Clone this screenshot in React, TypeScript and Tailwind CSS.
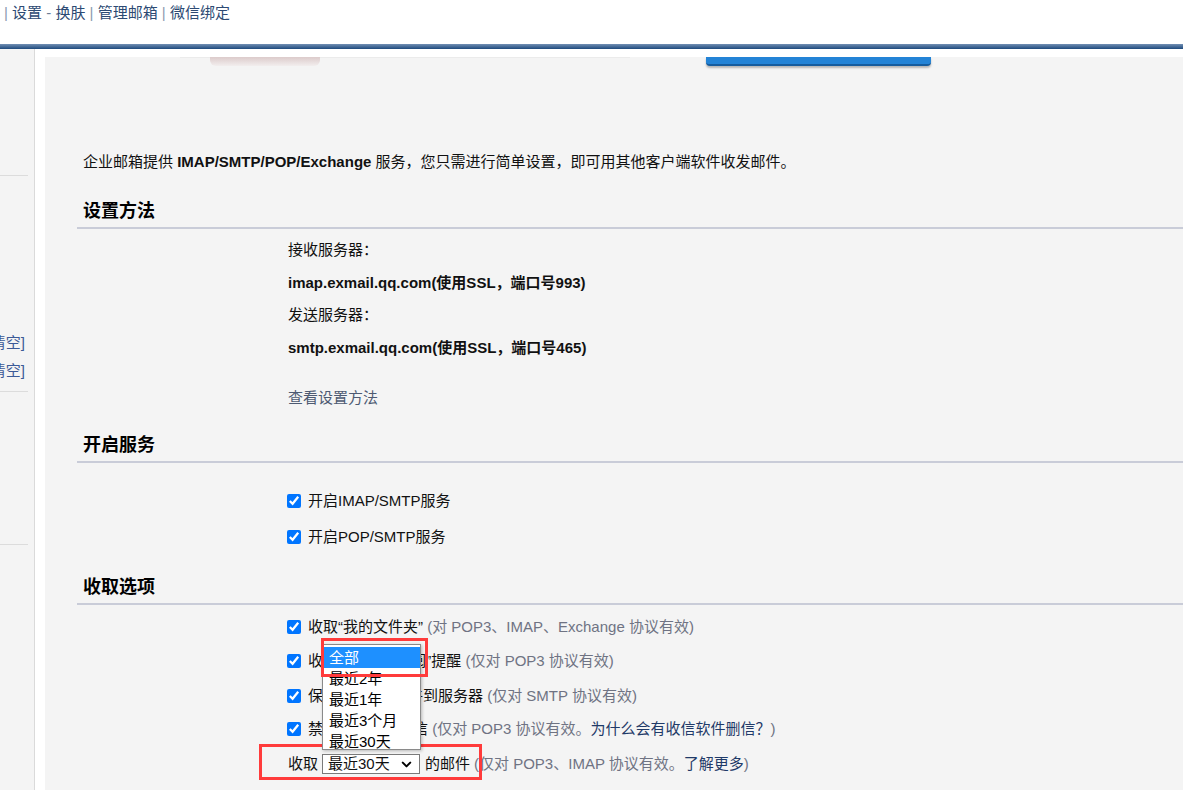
import { ChevronDown } from "lucide-react";

const hint = "text-[#6f7383]";
const link = "text-[#1f3a68]";

function Check({ children }: { children: React.ReactNode }) {
  return (
    <label className="flex h-[20px] items-center gap-[7px] leading-[20px] whitespace-nowrap">
      <input type="checkbox" defaultChecked className="m-0 h-[14px] w-[14px] shrink-0" />
      <span>{children}</span>
    </label>
  );
}

function SectionTitle({ children, className }: { children: React.ReactNode; className: string }) {
  return (
    <div className={`border-b-2 border-[#c9ccd8] pb-[4px] pl-[6px] ${className}`}>
      <div className="h-[24px] text-[18px] font-bold leading-[24px] text-black">{children}</div>
    </div>
  );
}

const options = ["全部", "最近2年", "最近1年", "最近3个月", "最近30天"];

export default function App() {
  return (
    <div className="flex h-[790px] w-[1183px] flex-col overflow-hidden bg-white font-['Liberation_Sans','Noto_Sans_CJK_SC',sans-serif] text-[15px] text-[#111]">
      {/* top nav */}
      <div className="h-[44px] shrink-0 pl-[4px] pt-[3px] leading-[20px] text-[#2d4a73] whitespace-nowrap">
        <span className="text-[#8c9ab0]">|</span> 设置 <span className="text-[#6d7d95]">-</span> 换肤{" "}
        <span className="text-[#8c9ab0]">|</span> 管理邮箱 <span className="text-[#8c9ab0]">|</span> 微信绑定
      </div>
      <div className="h-[5px] shrink-0 bg-gradient-to-b from-[#7290b4] to-[#1d4a7d]" />

      <div className="flex min-h-0 flex-1">
        {/* left sidebar */}
        <div className="w-[35px] shrink-0 border-r border-[#dadada] bg-[#f4f4f4]">
          <div className="mr-[6px] mt-[126px] h-px bg-[#dcdcdc]" />
          <div className="mt-[157px] flex flex-col gap-[8px] pr-[9px]">
            <div className="flex h-[20px] justify-end overflow-hidden whitespace-nowrap leading-[20px] text-[#3c5a97]">
              收件箱[清空]
            </div>
            <div className="flex h-[20px] justify-end overflow-hidden whitespace-nowrap leading-[20px] text-[#3c5a97]">
              垃圾箱[清空]
            </div>
          </div>
          <div className="mr-[6px] mt-[10px] h-px bg-[#dcdcdc]" />
          <div className="mr-[6px] mt-[152px] h-px bg-[#dcdcdc]" />
        </div>
        <div className="w-[10px] shrink-0" />

        {/* main panel */}
        <div className="mt-[8px] flex-1 bg-[#f4f4f4]">
          {/* partially scrolled away tabs */}
          <div className="flex h-[10px] items-start">
            <div className="ml-[135px] h-px w-[450px] bg-[#ebebeb]">
              <div className="ml-[30px] h-[9px] w-[110px] rounded-b-[6px] bg-gradient-to-b from-[#dccbcb] to-[#f2eeee]" />
            </div>
            <div className="ml-[76px] h-[9px] w-[225px] rounded-b-[4px] border-b-2 border-[#155c9e] bg-[#2383d6] shadow-[0_2px_2px_rgba(0,0,0,0.25)]" />
          </div>

          <div className="pl-[32px]">
            <div className="mt-[85px] h-[20px] pl-[6px] leading-[20px] whitespace-nowrap">
              企业邮箱提供 <b>IMAP/SMTP/POP/Exchange</b> 服务，您只需进行简单设置，即可用其他客户端软件收发邮件。
            </div>

            <SectionTitle className="mt-[27px]">设置方法</SectionTitle>
            <div className="flex flex-col pl-[211px] leading-[20px]">
              <div className="mt-[11px] h-[20px]">接收服务器：</div>
              <div className="mt-[13px] h-[20px] font-bold">imap.exmail.qq.com(使用SSL，端口号993)</div>
              <div className="mt-[12px] h-[20px]">发送服务器：</div>
              <div className="mt-[13px] h-[20px] font-bold">smtp.exmail.qq.com(使用SSL，端口号465)</div>
              <div className="mt-[30px] h-[20px] text-[#4d5a72]">查看设置方法</div>
            </div>

            <SectionTitle className="mt-[25px]">开启服务</SectionTitle>
            <div className="flex flex-col pl-[210px]">
              <div className="mt-[28px]">
                <Check>开启IMAP/SMTP服务</Check>
              </div>
              <div className="mt-[16px]">
                <Check>开启POP/SMTP服务</Check>
              </div>
            </div>

            <SectionTitle className="mt-[28px]">收取选项</SectionTitle>
            <div className="flex flex-col pl-[210px]">
              <div className="mt-[12px]">
                <Check>
                  收取“我的文件夹” <span className={hint}>(对 POP3、IMAP、Exchange 协议有效)</span>
                </Check>
              </div>
              <div className="mt-[14px]">
                <Check>
                  收取“QQ邮件订阅”提醒 <span className={hint}>(仅对 POP3 协议有效)</span>
                </Check>
              </div>
              <div className="mt-[15px]">
                <Check>
                  保存“已发送”邮件到服务器 <span className={hint}>(仅对 SMTP 协议有效)</span>
                </Check>
              </div>
              <div className="mt-[13px]">
                <Check>
                  禁止收信软件删信{" "}
                  <span className={hint}>
                    (仅对 POP3 协议有效。<span className={link}>为什么会有收信软件删信？</span>)
                  </span>
                </Check>
              </div>

              {/* fetch range row */}
              <div className="relative mt-[15px] flex h-[20px] items-center pl-[1px] leading-[20px] whitespace-nowrap">
                <div className="pointer-events-none absolute left-[-28px] top-[-10px] h-[36px] w-[223px] border-[3px] border-[#ff3b3b]" />
                <span>收取</span>
                <div className="relative ml-[4px] flex h-[20px] w-[98px] items-center justify-between border border-[#7a7a7a] bg-white pl-[5px] pr-[5px]">
                  <span>最近30天</span>
                  <ChevronDown size={15} strokeWidth={3.2} className="text-black" />
                  {/* open option list */}
                  <div className="absolute bottom-[23px] left-[-1px] h-[106px] w-[99px] overflow-hidden border border-[#8a8a8a] bg-white pt-[2px] shadow-[1px_1px_3px_rgba(0,0,0,0.25)]">
                    {options.map((o, i) => (
                      <div
                        key={o}
                        className={`h-[21px] pl-[6px] leading-[21px] ${i === 0 ? "bg-[#1e90ff] text-white" : "text-black"}`}
                      >
                        {o}
                      </div>
                    ))}
                  </div>
                  <div className="pointer-events-none absolute left-[-2px] top-[-117px] h-[39px] w-[107px] border-[3px] border-[#ff3b3b]" />
                </div>
                <span className="ml-[5px]">的邮件</span>
                <span className={`ml-[4px] ${hint}`}>
                  (仅对 POP3、IMAP 协议有效。<span className={link}>了解更多</span>)
                </span>
              </div>
            </div>
          </div>
        </div>
      </div>
    </div>
  );
}
